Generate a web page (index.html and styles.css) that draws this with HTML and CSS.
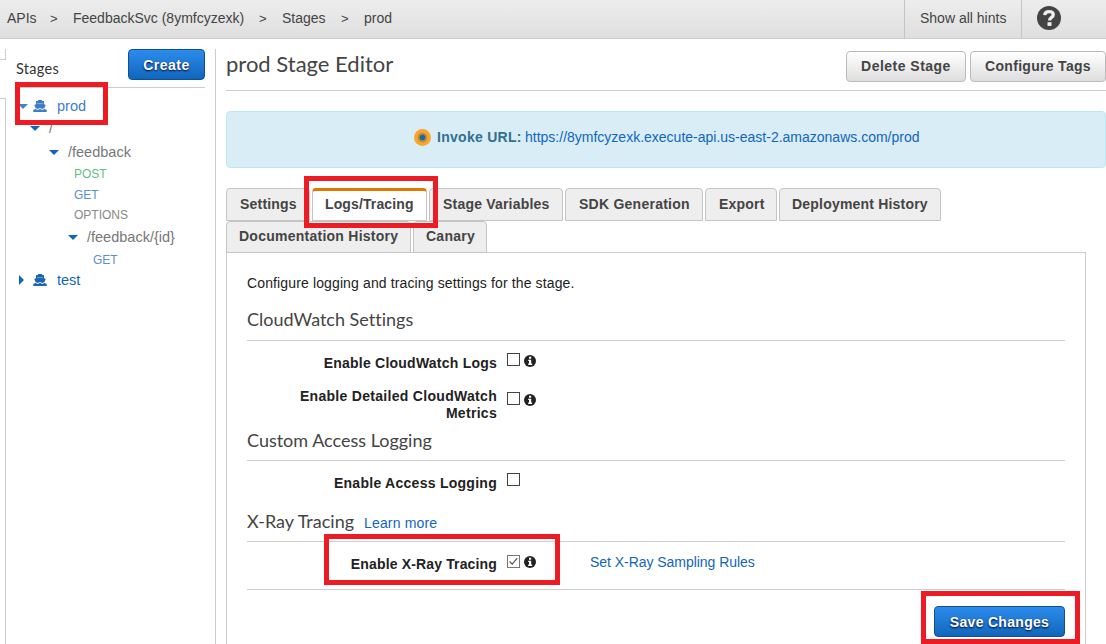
FILE: index.html
```html
<!DOCTYPE html>
<html lang="en">
<head>
<meta charset="utf-8">
<title>prod Stage Editor</title>
<link rel="stylesheet" href="styles.css">
</head>
<body>
<svg class="defs" width="0" height="0">
  <symbol id="ship" viewBox="0 0 14 12"><path d="M5 0h4v1h2v3.200l1.800.8-1.500 3.200c-.8 0-1.200.7-2 .7S8 8.200 7 8.200s-1.500.7-2.300.7-1.200-.7-2-.7L1.200 5 3 4.200V1h2z"/><path d="M.3 9.800c1.200 0 1.500-.8 2.200-.8s1 .8 2.200.8S6.200 9 7 9s1.100.8 2.300.8 1.400-.8 2.200-.8 1 .8 2.200.8V12H.3z"/><path d="M4 3.600h6" stroke="#fff" stroke-opacity=".45" stroke-width=".8"/></symbol>
  <symbol id="info" viewBox="0 0 12 12"><circle cx="6" cy="6" r="6"/><path fill="#fff" d="M5 1.700h2.200v2H5zM4.200 4.700h3v3.800h.9V10H4.200V8.500H5V6h-.8z"/></symbol>
</svg>
<header class="topbar">
  <nav class="crumbs">
    <span class="c1">APIs</span><span class="sep">&gt;</span><span class="c2">FeedbackSvc (8ymfcyzexk)</span><span class="sep">&gt;</span><span class="c3">Stages</span><span class="sep">&gt;</span><span class="c4">prod</span>
  </nav>
  <div class="hints">Show all hints</div>
  <div class="help"><svg width="24" height="24" viewBox="0 0 24 24"><circle cx="12" cy="12" r="12" fill="#444"/><path d="M7.700 9.200C7.900 6.800 9.700 5.700 12 5.700c2.700 0 4.300 1.200 4.300 3.100 0 2.700-3.800 2.500-3.800 5.800" fill="none" stroke="#eee" stroke-width="3.300"/><path d="M10.500 16.200h4v3.700h-4z" fill="#eee"/></svg></div>
</header>
<div class="layout">
  <div class="rail"><div class="rail-top"></div><div class="rail-rest"></div></div>
  <aside class="sidebar">
    <div class="side-head"><h2>Stages</h2><button class="btn primary create">Create</button></div>
    <ul class="tree">
      <li class="r-prod"><i class="down"></i><svg class="ship" width="14" height="12"><use href="#ship"/></svg><span>prod</span></li>
      <li class="r-root"><i class="down"></i><span>/</span></li>
      <li class="r-feed"><i class="down"></i><span>/feedback</span></li>
      <li class="method post">POST</li>
      <li class="method get">GET</li>
      <li class="method options">OPTIONS</li>
      <li class="r-id"><i class="down"></i><span>/feedback/{id}</span></li>
      <li class="method get nested">GET</li>
      <li class="r-test"><i class="right"></i><svg class="ship" width="14" height="12"><use href="#ship"/></svg><span>test</span></li>
    </ul>
  </aside>
  <main class="main">
    <div class="title-row"><h1>prod Stage Editor</h1><div class="actions"><button class="btn delete">Delete Stage</button><button class="btn config">Configure Tags</button></div></div>
    <div class="invoke"><svg width="17" height="17" viewBox="0 0 17 17"><circle cx="8.500" cy="8.500" r="8.500" fill="#f9a52b"/><circle cx="8.500" cy="8.500" r="4.800" fill="#b98c35"/><circle cx="8.500" cy="8.500" r="2.800" fill="#1a66b0"/></svg><b>Invoke URL:</b><a>https://8ymfcyzexk.execute-api.us-east-2.amazonaws.com/prod</a></div>
    <div class="tabs">
      <div class="tab t1">Settings</div><div class="tab t2 active">Logs/Tracing</div><div class="tab t3">Stage Variables</div><div class="tab t4">SDK Generation</div><div class="tab t5">Export</div><div class="tab t6">Deployment History</div>
    </div>
    <div class="tabs second"><div class="tab t7">Documentation History</div><div class="tab t8">Canary</div></div>
    <section class="panel">
      <p class="intro">Configure logging and tracing settings for the stage.</p>
      <h3 class="h-cw">CloudWatch Settings</h3>
      <div class="field f1"><label>Enable CloudWatch Logs</label><span class="box"></span><svg class="info" width="12" height="12"><use href="#info"/></svg></div>
      <div class="field f2"><label>Enable Detailed CloudWatch Metrics</label><span class="box"></span><svg class="info" width="12" height="12"><use href="#info"/></svg></div>
      <h3 class="h-cal">Custom Access Logging</h3>
      <div class="field f3"><label>Enable Access Logging</label><span class="box"></span></div>
      <h3 class="h-xray">X-Ray Tracing<a>Learn more</a></h3>
      <div class="field f4"><label>Enable X-Ray Tracing</label><span class="box checked"><svg width="11" height="11" viewBox="0 0 11 11"><path d="M1.500 5.500l2.700 2.700 5-6" fill="none" stroke="#555" stroke-width="1.200"/></svg></span><svg class="info" width="12" height="12"><use href="#info"/></svg><a>Set X-Ray Sampling Rules</a></div>
      <div class="save-row"><button class="btn primary save">Save Changes</button></div>
    </section>
  </main>
</div>
<div class="mark m-prod"></div>
<div class="mark m-logs"></div>
<div class="mark m-xray"></div>
<div class="mark m-save"></div>
</body>
</html>
```
FILE: styles.css
```css
* { box-sizing: border-box; }
body { margin: 0; width: 1106px; height: 644px; overflow: hidden; position: relative; background: #fff; color: #222; font: 14px/17px "Liberation Sans", Arial, sans-serif; white-space: nowrap; }
.defs { display: block; height: 0; }
h1, h2, h3, p, ul { margin: 0; padding: 0; font-weight: 400; list-style: none; }
a { color: #1166bb; }
svg { flex: none; }

.topbar { display: flex; height: 39px; background: linear-gradient(#ededed, #dfdfdf); border-bottom: 1px solid #ccc; color: #444; line-height: 37px; }
.crumbs { display: flex; width: 904px; padding-left: 7px; }
.c1 { width: 43px; }
.c2 { width: 186px; }
.c3 { width: 59px; }
.sep { width: 23px; font-size: 13px; }
.hints { width: 118px; border: solid #c4c4c4; border-width: 0 1px; padding-left: 15px; }
.help { padding: 6px 0 0 15px; line-height: 0; }

.layout { display: flex; height: 605px; padding-top: 10px; }
.rail { width: 6px; display: flex; flex-direction: column; justify-content: space-between; }
.rail-top { height: 11px; border: solid #ccc; border-width: 0 1px 1px 0; }
.rail-rest { height: 546px; border: solid #ccc; border-width: 1px 1px 0 0; }
.sidebar { width: 210px; border-right: 1px solid #ccc; padding: 0 10px; }
.side-head { display: flex; justify-content: space-between; height: 39px; border-bottom: 1px solid #ccc; }
.side-head h2 { font: 14.500px/40px Lato, sans-serif; letter-spacing: .3px; color: #333; }

.btn { height: 31px; padding: 0; border: 1px solid #bbb; border-radius: 4px; background: linear-gradient(#fff, #dedede); color: #444; font: bold 14px/28px "Liberation Sans", Arial, sans-serif; letter-spacing: .48px; }
.config, .save { letter-spacing: .3px; }
.btn.primary { background: linear-gradient(#2c8cec, #1166bb); border-color: #0d5193; color: #fff; text-shadow: 0 1px 2px #003; }
.create { width: 77px; }
.delete { width: 120px; padding-bottom: 2px; }
.config { width: 136px; padding-bottom: 2px; }
.save { width: 131px; }

.tree { color: #777; }
.tree li { display: flex; align-items: center; height: 21px; }
.tree i { width: 0; height: 0; border: 5px solid transparent; flex: none; }
.tree .down { border-top-color: #1166bb; border-bottom: 0; }
.tree .right { border-left-color: #1166bb; border-right: 0; }
.ship { fill: #3d7dc2; }
.tree .r-prod { margin-top: 7px; height: 22px; padding-left: 2px; color: #3d7dca; }
.r-prod i { opacity: .8; }
.r-prod .ship { margin-left: 5px; }
.r-prod span, .r-test span { margin-left: 10px; font-size: 14.500px; }
.tree .r-root { padding-left: 14px; height: 22px; }
.r-root span { margin-left: 9px; }
.tree .r-feed { padding-left: 33px; height: 26px; }
.r-feed span, .r-id span { margin-left: 9px; font-size: 14.500px; }
.tree .method { padding-left: 58px; font-size: 12px; height: 22px; }
.tree .post { height: 18px; color: #5fbf7f; }
.tree .get { height: 24px; color: #5c8fc9; }
.tree .options { height: 17px; color: #888; }
.tree .nested { padding-left: 77px; height: 20px; }
.tree .r-id { padding-left: 52px; height: 26px; }
.tree .r-test { height: 20px; padding-left: 3px; color: #1166bb; }
.r-test .ship { margin-left: 9px; fill: #1b65b0; }

.main { width: 890px; padding-left: 10px; }
.title-row { display: flex; justify-content: space-between; height: 42px; border-bottom: 1px solid #ccc; }
h1 { font: 22px/30px Lato, sans-serif; color: #444; }
.actions { display: flex; gap: 4px; padding-top: 2px; }
.invoke { display: flex; align-items: center; margin-top: 20px; height: 57px; padding: 0 0 5px 187px; border: 1px solid #bce8f1; border-radius: 4px; background: #d9edf7; }
.invoke b { margin-left: 6px; width: 88px; color: #31708f; letter-spacing: .28px; }
.tabs { display: flex; gap: 2px; margin-top: 20px; height: 33px; }
.tabs.second { margin-top: 0; height: 31px; }
.tab { height: 33px; padding-left: 13px; border: 1px solid #c4c4c4; border-radius: 4px 4px 0 0; background: #eee; color: #444; font-weight: bold; line-height: 31px; letter-spacing: .2px; }
.second .tab { height: 32px; padding-left: 12px; line-height: 29px; letter-spacing: .25px; }
.tab.active { background: #fff; border-top: 3px solid #e07700; line-height: 27px; padding-left: 12px; letter-spacing: .12px; }
.t1 { width: 84px; }
.t2 { width: 115px; }
.t3 { width: 134px; }
.t4 { width: 138px; }
.tab.t4 { letter-spacing: .25px; }
.t5 { width: 72px; }
.t6 { width: 162px; }
.tab.t6 { padding-left: 12px; }
.t7 { width: 185px; }
.t8 { width: 74px; }

.panel { width: 860px; height: 400px; padding: 22px 20px 0; border: solid #ccc; border-width: 1px 1px 0; }
.intro { height: 29px; letter-spacing: .13px; }
.panel h3 { font: 18px/30px Lato, sans-serif; font-variant-ligatures: none; color: #444; border-bottom: 1px solid #ccc; height: 37px; }
.panel h3 a { margin-left: 10px; font: 14px "Liberation Sans", Arial, sans-serif; letter-spacing: .15px; }
.field { display: flex; }
label { width: 250px; text-align: right; font-weight: bold; white-space: normal; letter-spacing: .23px; padding-left: 30px; }
.box { width: 13px; height: 13px; margin: 0 4px 0 10px; border: 1px solid #444; background: #fff; display: flex; }
.checked { border-color: #777; }
.info { fill: #222; margin-top: 2px; }
.f1 { height: 36px; padding-top: 12px; }
.f1 label { padding-top: 2px; }
.f2 { height: 49px; padding-top: 11px; }
.f2 label { letter-spacing: .3px; }
.f2 .box { margin-top: 4px; }
.f2 .info { margin-top: 6px; }
.panel .h-cal { height: 35px; line-height: 29px; }
.f3 { height: 46px; padding-top: 12px; }
.f3 label { padding-top: 2px; letter-spacing: .27px; }
.panel .h-xray { height: 35px; line-height: 29px; }
.f4 { height: 48px; padding-top: 12px; border-bottom: 1px solid #ccc; }
.f4 label { padding-top: 2px; letter-spacing: .15px; }
.f4 .box { margin-top: 1px; }
.f4 .info { margin-top: 2px; }
.f4 a { margin-left: 54px; letter-spacing: -.04px; }
.save-row { display: flex; justify-content: flex-end; padding-top: 16px; }

.mark { position: absolute; border: 5px solid #ed1c24; }
.m-prod { left: 15px; top: 82px; width: 93px; height: 43px; }
.m-logs { left: 304px; top: 176px; width: 134px; height: 52px; }
.m-xray { left: 324px; top: 534px; width: 236px; height: 51px; }
.m-save { left: 921px; top: 591px; width: 159px; height: 53px; }
```
